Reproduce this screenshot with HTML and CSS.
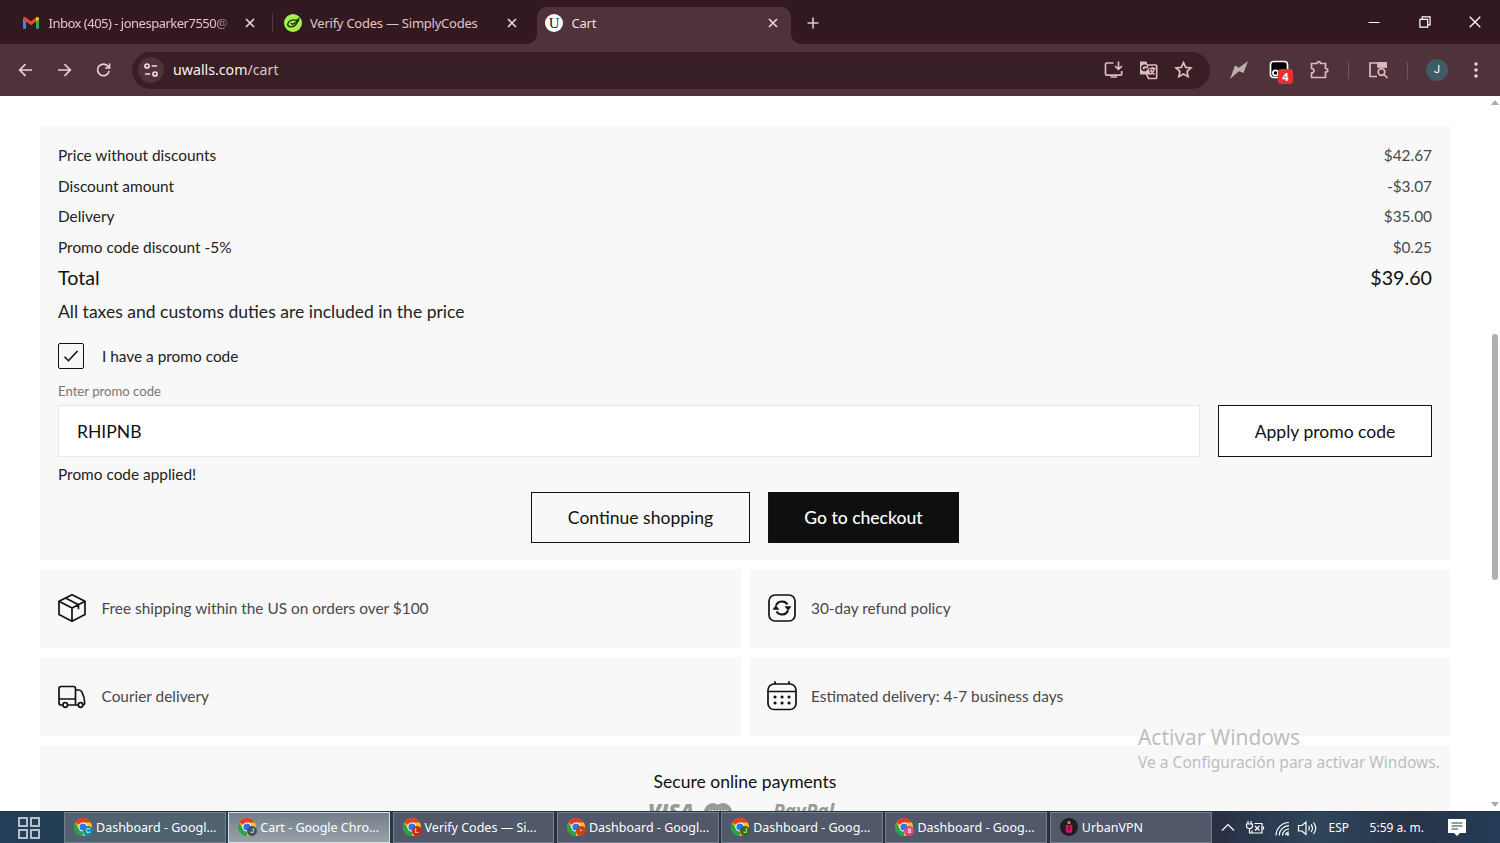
FILE: index.html
```html
<!DOCTYPE html>
<html lang="en">
<head>
    <meta charset="UTF-8">
    <meta name="viewport" content="width=device-width, initial-scale=1.0">
    <title>Cart</title>
    <link rel="stylesheet" href="styles.css">
</head>
<body>
    <svg class="defs" width="0" height="0">
        <symbol id="close" viewBox="0 0 10 10"><path d="M1 1l8 8M9 1l-8 8" fill="none" stroke="currentColor" stroke-width="1.7"/></symbol>
        <symbol id="chrome" viewBox="0 0 20 20">
            <circle cx="10" cy="10" r="9" fill="#fbc31c"/>
            <path d="M10 10L2.2 5.5A9 9 0 0 1 17.8 5.5H10z" fill="#e33b2e"/>
            <path d="M10 10L10 19A9 9 0 0 1 2.2 5.5L6 12z" fill="#2aa24c"/>
            <circle cx="10" cy="10" r="4.6" fill="#fff"/>
            <circle cx="10" cy="10" r="3.6" fill="#2f74e8"/>
        </symbol>
    </svg>

    <div class="tab-strip">
        <div class="tab">
            <svg class="favicon" viewBox="0 0 18 18">
                <path d="M1 4.5V14.8h3V7.5z" fill="#4285f4"/>
                <path d="M17 4.5V14.8h-3V7.5z" fill="#34a853"/>
                <path d="M1 4.6C1 3 3 2.5 4 3.5l5 3.8 5-3.8v4L9 11.3 1 5.6z" fill="#ea4335"/>
                <path d="M14 3.5C15 2.5 17 3 17 4.8v.8l-3 2.2z" fill="#fbbc04"/>
            </svg>
            <span class="tab-title fade">Inbox (405) - jonesparker7550@</span>
            <svg class="tab-close"><use href="#close"/></svg>
        </div>
        <div class="tab divided">
            <svg class="favicon" viewBox="0 0 18 18">
                <circle cx="9" cy="9" r="9" fill="#a5f04b"/>
                <path d="M12.5 6.6C9 4.7 4.2 7 3.7 10c-.3 3 4.3 3.9 7.3 1.4 1.5-1.2 2.3-2.7 2.6-4.2L8.5 10.3 6.6 9M12 6.5l2.700-1.7-.7 3" fill="none" stroke="#20350f" stroke-width="1.4"/>
            </svg>
            <span class="tab-title">Verify Codes — SimplyCodes</span>
            <svg class="tab-close"><use href="#close"/></svg>
        </div>
        <div class="tab active">
            <span class="favicon cart-favicon">U</span>
            <span class="tab-title">Cart</span>
            <svg class="tab-close"><use href="#close"/></svg>
        </div>
        <svg class="new-tab" viewBox="0 0 12 12"><path d="M6 .5v11M.5 6h11" fill="none" stroke="currentColor" stroke-width="1.6"/></svg>
        <div class="window-controls">
            <svg viewBox="0 0 12 12"><path d="M.5 6.500h11" stroke="currentColor"/></svg>
            <svg viewBox="0 0 12 12"><path d="M.9 3.3h7.8v7.8H.9zM3.2 3.3V.9h7.9v7.9H8.7" fill="none" stroke="currentColor" stroke-width="1.2"/></svg>
            <svg viewBox="0 0 12 12"><path d="M.7.7l10.6 10.6M11.3.7L.7 11.3" stroke="currentColor" stroke-width="1.3"/></svg>
        </div>
    </div>

    <div class="toolbar">
        <div class="nav">
            <svg viewBox="0 0 16 16"><path d="M14.5 8H2.5M8 2.2L2.2 8 8 13.8"/></svg>
            <svg viewBox="0 0 16 16"><path d="M1.5 8h12M8 2.2L13.8 8 8 13.8"/></svg>
            <svg viewBox="0 0 16 16"><path d="M13.6 8.8A5.8 5.8 0 1 1 12.4 4.200L14 6M14 1.5V6H9.6"/></svg>
        </div>
        <div class="omnibox">
            <span class="site-info">
                <svg viewBox="0 0 16 16"><path d="M8.8 4H14M2 12h5.2"/><circle cx="4" cy="4" r="2"/><circle cx="12" cy="12" r="2"/></svg>
            </span>
            <span class="url">uwalls.com<span>/cart</span></span>
            <div class="omni-actions">
                <svg viewBox="0 0 20 20"><path d="M10 3H3.2A1.2 1.2 0 0 0 2 4.2V14a1.2 1.2 0 0 0 1.2 1.2H17a1.2 1.2 0 0 0 1.2-1.2V11M15 1.5V9M11.5 6L15 9.3 18.5 6M7 17h6.5"/></svg>
                <svg viewBox="0 0 20 20"><path d="M8 5h9.2a1 1 0 0 1 1 1v11.5a1 1 0 0 1-1 1H10L8 14M11 8.5h6M14 7v1.5M15.800 8.7c-.5 2.5-2 4.5-4 5.8M12 10c1 2 2.5 3.5 4 4.5"/><path d="M1.5 1.5H8l4 13H2.5a1 1 0 0 1-1-1z" fill="#dfb9c1" stroke="none"/><path d="M8 6.3A2.6 2.6 0 1 0 8.3 9H6" stroke="#3a1f25"/></svg>
                <svg viewBox="0 0 20 20"><path d="M10 2.6l2.200 4.800 5.200.6-3.900 3.500 1.100 5.200L10 14.100l-4.600 2.600 1.100-5.200L2.600 8l5.200-.6z"/></svg>
            </div>
        </div>
        <div class="extensions">
            <svg viewBox="0 0 20 20"><path d="M1 19L6 5.500l4 2.300L19 1l-4.500 12-4.500-1.800z" fill="#b9b0ad" stroke="none"/></svg>
            <span class="ext-badge">
                <svg viewBox="0 0 20 20"><rect x="1.5" y="1.5" width="17" height="16" rx="3" fill="#000" stroke="#fff"/><circle cx="6.5" cy="13" r="2.6" stroke="#fff"/></svg>
                <b>4</b>
            </span>
            <svg viewBox="0 0 20 20"><path d="M2.5 3.5H8C8 1 11.5 1 11.5 3.5h5v5c3 0 3 3.5 0 3.5v5.5h-14V13c3.3 0 3.3-4.5 0-4.500z"/></svg>
            <i class="sep"></i>
            <svg viewBox="0 0 20 20"><path d="M9 16.5H2V3h16v5"/><path d="M10 3h8v4h-8z" fill="#dfb9c1"/><circle cx="13.5" cy="12" r="3.3"/><path d="M16 14.5l3.5 3.5"/></svg>
            <i class="sep"></i>
            <span class="avatar">J</span>
            <svg class="dots" viewBox="0 0 20 20"><circle cx="10" cy="4" r="1.8"/><circle cx="10" cy="10" r="1.8"/><circle cx="10" cy="16" r="1.8"/></svg>
        </div>
    </div>

    <div class="viewport">
        <main class="page">
            <section class="summary">
                <div class="row"><span>Price without discounts</span><span class="value">$42.67</span></div>
                <div class="row"><span>Discount amount</span><span class="value">-$3.07</span></div>
                <div class="row"><span>Delivery</span><span class="value">$35.00</span></div>
                <div class="row"><span>Promo code discount -5%</span><span class="value">$0.25</span></div>
                <div class="row total"><span>Total</span><span>$39.60</span></div>
                <p class="note">All taxes and customs duties are included in the price</p>
                <div class="promo-toggle">
                    <span class="checkbox">
                        <svg viewBox="0 0 16 16"><path d="M1.5 8.7l4 4L14.5 3" fill="none" stroke="#111" stroke-width="1.6"/></svg>
                    </span>
                    <span>I have a promo code</span>
                </div>
                <div class="promo-label">Enter promo code</div>
                <div class="promo-form">
                    <div class="promo-input">RHIPNB</div>
                    <div class="btn apply">Apply promo code</div>
                </div>
                <div class="promo-status">Promo code applied!</div>
                <div class="actions">
                    <div class="btn continue">Continue shopping</div>
                    <div class="btn checkout">Go to checkout</div>
                </div>
            </section>

            <section class="benefits">
                <div class="benefit">
                    <svg viewBox="0 0 30 30"><path d="M15 1.7l13 6.6v13.2l-13 6.8-13-6.8V8.3zM2 8.3l13 6.8 13-6.8M15 15.1v13.2M8.5 5l13 6.800v4.5"/></svg>
                    <span>Free shipping within the US on orders over $100</span>
                </div>
                <div class="benefit">
                    <svg viewBox="0 0 30 30"><rect x="2" y="2" width="26" height="26" rx="6"/><path d="M9 12.500A6.500 6.500 0 0 1 20.500 11.500M21 17.500A6.500 6.500 0 0 1 9.500 18.500" stroke-width="2"/><path d="M6 16.500l2.800-4 3.200 4zM24 13.500l-2.800 4-3.200-4z" fill="#111" stroke-width=".5"/></svg>
                    <span>30-day refund policy</span>
                </div>
                <div class="benefit">
                    <svg viewBox="0 0 30 30"><path d="M6 24H4a2 2 0 0 1-2-2V7.500a2 2 0 0 1 2-2h12.500a2 2 0 0 1 2 2V24H10.500M2 18h16.500M18.500 9H22c1.500 0 2.300.8 3 2.200 1.700 3.300 2.700 7 2.700 10.800a2 2 0 0 1-1.500 2M18.500 24h2.700"/><circle cx="8.200" cy="24" r="2.300"/><circle cx="23.600" cy="24" r="2.300"/></svg>
                    <span>Courier delivery</span>
                </div>
                <div class="benefit">
                    <svg viewBox="0 0 30 30"><rect x="1" y="3" width="28" height="25.500" rx="6"/><path d="M1 10.500h28M8 .2V3M22 .2V3"/><path d="M8 16h.1M15 16h.1M22 16h.1M8 22h.1M15 22h.1M22 22h.1" stroke-width="3" stroke-linecap="round"/></svg>
                    <span>Estimated delivery: 4-7 business days</span>
                </div>
            </section>

            <section class="payments">
                <div class="payments-title">Secure online payments</div>
                <div class="payment-logos">
                    <span class="visa">VISA</span>
                    <svg class="mastercard" viewBox="0 0 28 18"><circle cx="9" cy="9" r="9"/><circle cx="19" cy="9" r="9"/><path d="M5 7.500h19" stroke="#d5d5d5" stroke-dasharray="2 1"/></svg>
                    <span class="paypal">PayPal</span>
                </div>
            </section>
        </main>
        <div class="scrollbar">
            <svg viewBox="0 0 8 5"><path d="M0 5l4-5 4 5z"/></svg>
            <i class="thumb"></i>
            <svg viewBox="0 0 8 5"><path d="M0 0l4 5 4-5z"/></svg>
        </div>
        <div class="watermark">
            <div class="watermark-title">Activar Windows</div>
            <div class="watermark-text">Ve a Configuración para activar Windows.</div>
        </div>
    </div>

    <div class="taskbar">
        <svg class="task-view" viewBox="0 0 22 22"><path d="M1 1h8v8H1zM13 1h8v8h-8zM1 13h8v8H1zM13 13h8v8h-8z"/></svg>
        <div class="tasks">
            <div class="task"><span class="task-icon"><svg><use href="#chrome"/></svg><b class="teal">C</b></span><span>Dashboard - Googl...</span></div>
            <div class="task current"><span class="task-icon"><svg><use href="#chrome"/></svg><b class="slate">J</b></span><span>Cart - Google Chro...</span></div>
            <div class="task"><span class="task-icon"><svg><use href="#chrome"/></svg><b class="red">L</b></span><span>Verify Codes — Si...</span></div>
            <div class="task"><span class="task-icon"><svg><use href="#chrome"/></svg><b class="orange">•</b></span><span>Dashboard - Googl...</span></div>
            <div class="task"><span class="task-icon"><svg><use href="#chrome"/></svg><b class="green">J</b></span><span>Dashboard - Goog...</span></div>
            <div class="task"><span class="task-icon"><svg><use href="#chrome"/></svg><b class="pink">ä</b></span><span>Dashboard - Goog...</span></div>
            <div class="task">
                <span class="task-icon"><svg viewBox="0 0 20 20"><circle cx="10" cy="10" r="9" fill="#201c22"/><path d="M6.800 8h6.400v5.500q0 2.500-3.200 2.500t-3.200-2.500z" fill="#c41a62"/><path d="M9.500 9h1.200v4.500H9.500z" fill="#5d1234"/><circle cx="10" cy="5.500" r="1.600" fill="#d8932c"/></svg></span>
                <span>UrbanVPN</span>
            </div>
        </div>
        <div class="tray">
            <svg viewBox="0 0 20 20"><path d="M4 12.500l6-6 6 6"/></svg>
            <svg viewBox="0 0 20 20"><path d="M3 3v3M6 3v3M1.500 6h6v2q0 2.500-3 2.500t-3-2.500zM4.500 10.500V15H7M9.500 5.500H17V15H7V12.500M18.500 8.500v3M10 8l4.500 4.500M14.500 8L10 12.500"/></svg>
            <svg viewBox="0 0 20 20"><path d="M4 17.500A13 13 0 0 1 17 4.500M7.200 17.500A9.800 9.800 0 0 1 17 7.700M10.500 17.500A6.500 6.500 0 0 1 17 11M13.500 17A3.500 3.500 0 0 1 17 14"/><circle cx="15.800" cy="16.500" r="1.300" fill="#fff" stroke="none"/></svg>
            <svg viewBox="0 0 20 20"><path d="M1.500 7.500H5L9 4v12.500L5 13H1.500zM11.500 8q1.700 2.200 0 4.500M14 6.500q3 3.700 0 7.500M16.500 4.500q4.500 5.700 0 11.500"/></svg>
            <span class="lang">ESP</span>
            <span class="clock">5:59 a. m.</span>
            <svg class="notice" viewBox="0 0 20 20"><path d="M1 1h18v14h-6l-3 3-3-3H1z" fill="#fff" stroke="none"/><path d="M4.500 5h11M4.500 8h11M4.500 11h6.500" stroke="#26384f"/></svg>
        </div>
    </div>
</body>
</html>
```
FILE: styles.css
```css
* {
    margin: 0;
    padding: 0;
    box-sizing: border-box;
}

body {
    width: 1500px;
    height: 843px;
    overflow: hidden;
    display: flex;
    flex-direction: column;
    background: #fff;
    font-family: 'Noto Sans', sans-serif;
}

svg {
    display: block;
    flex: none;
}

.defs {
    position: absolute;
}

/* Browser tabs */
.tab-strip {
    height: 44px;
    flex: none;
    display: flex;
    align-items: flex-end;
    padding-left: 14px;
    background: #32191f;
    color: #e3c3ca;
}

.tab {
    width: 254px;
    height: 37px;
    margin-right: 7.5px;
    padding: 0 13px 6px 8px;
    display: flex;
    align-items: center;
    font-size: 13px;
    letter-spacing: -0.24px;
}

.tab.divided {
    border-image: linear-gradient(#32191f 18%, #56383f 18%, #56383f 66%, #32191f 66%) 1;
    border-left: 1px solid;
    margin-left: -4px;
    padding-left: 11px;
    width: 258px;
}

.tab.active {
    position: relative;
    background: #50323a;
    border-radius: 10px 10px 0 0;
    color: #f3dde1;
}

.tab.active::before,
.tab.active::after {
    content: '';
    position: absolute;
    bottom: 0;
    width: 10px;
    height: 10px;
}

.tab.active::before {
    left: -10px;
    background: radial-gradient(circle at 0 0, transparent 9.5px, #50323a 10px);
}

.tab.active::after {
    right: -10px;
    background: radial-gradient(circle at 100% 0, transparent 9.5px, #50323a 10px);
}

.favicon {
    width: 18px;
    height: 18px;
    flex: none;
}

.cart-favicon {
    border-radius: 50%;
    background: #fff;
    color: #222;
    font: 15px/18px 'Liberation Serif', serif;
    text-align: center;
}

.tab-title {
    flex: 1;
    margin-left: 8.5px;
    white-space: nowrap;
    overflow: hidden;
}

.tab-title.fade {
    flex: none;
    width: 184px;
    margin-right: auto;
    letter-spacing: -0.5px;
    -webkit-mask-image: linear-gradient(90deg, #000 90%, transparent);
    mask-image: linear-gradient(90deg, #000 90%, transparent);
}

.tab-close {
    width: 10px;
    height: 10px;
    color: #efd0d7;
}

.new-tab {
    width: 12px;
    height: 12px;
    margin: 0 0 15px 8px;
}

.window-controls {
    align-self: center;
    display: flex;
    gap: 38.5px;
    margin-left: auto;
    margin-right: 19px;
    color: #fff;
}

.window-controls svg {
    width: 12px;
    height: 12px;
}

/* Toolbar */
.toolbar {
    height: 52px;
    flex: none;
    display: flex;
    align-items: center;
    padding-left: 6px;
    background: #50323a;
    color: #dfb9c1;
}

.toolbar svg {
    fill: none;
    stroke: currentColor;
    stroke-width: 1.7;
}

.nav {
    display: flex;
    color: #ecd0d6;
}

.nav svg {
    width: 39px;
    height: 16px;
}

.omnibox {
    width: 1078px;
    height: 37px;
    margin-left: 9px;
    padding: 0 9px 0 6px;
    display: flex;
    align-items: center;
    border-radius: 19px;
    background: #381f25;
}

.site-info {
    width: 26px;
    height: 26px;
    display: flex;
    align-items: center;
    justify-content: center;
    border-radius: 50%;
    background: #50323a;
    color: #f3dde1;
}

.site-info svg {
    width: 16px;
    height: 16px;
}

.url {
    margin: -2px 0 0 9px;
    font-size: 14.2px;
    color: #fbeff1;
}

.url span {
    color: #dcc3c8;
}

.omni-actions {
    display: flex;
    margin-left: auto;
}

.omni-actions svg {
    width: 35px;
    height: 20px;
}

.extensions {
    display: flex;
    align-items: center;
    margin-left: 9px;
}

.extensions > svg {
    width: 40px;
    height: 20px;
}

.ext-badge {
    position: relative;
    width: 40px;
    padding-left: 10px;
}

.ext-badge svg {
    width: 20px;
    height: 20px;
}

.ext-badge b {
    position: absolute;
    left: 19px;
    top: 9px;
    width: 15px;
    height: 15px;
    border-radius: 3px;
    background: #e5322f;
    color: #fff;
    font: bold 11px/16px 'Open Sans', sans-serif;
    text-align: center;
}

.sep {
    width: 1px;
    height: 17px;
    margin: 0 9px;
    background: #74535b;
}

.avatar {
    width: 22px;
    height: 22px;
    margin: 0 9px;
    border-radius: 50%;
    background: #3f5c66;
    color: #fff;
    font: 11px/22px 'Roboto', sans-serif;
    text-align: center;
}

.extensions .dots {
    width: 38px;
    fill: #ecd0d6;
    stroke: none;
}

/* Cart page */
.viewport {
    position: relative;
    height: 715px;
    flex: none;
    overflow: hidden;
    display: flex;
    justify-content: space-between;
    background: #fff;
    font-family: 'Lato', sans-serif;
    color: #222;
}

.page {
    width: 1410px;
    margin-left: 40px;
    padding-top: 30px;
}

.summary {
    height: 434px;
    padding: 14px 18px 0;
    background: #f8f8f8;
    font-size: 15.4px;
}

.row {
    height: 30.7px;
    display: flex;
    justify-content: space-between;
    line-height: 31px;
}

.row .value {
    color: #484848;
}

.row.total {
    height: 29px;
    line-height: 29px;
    font-size: 19.7px;
    color: #111;
}

.note {
    margin-top: 8px;
    font-size: 17.55px;
    line-height: 24px;
}

.promo-toggle {
    display: flex;
    align-items: center;
    height: 26px;
    margin-top: 19px;
}

.checkbox {
    width: 26px;
    height: 26px;
    margin-right: 18px;
    display: flex;
    align-items: center;
    justify-content: center;
    border: 1px solid #111;
    border-radius: 2px;
}

.checkbox svg {
    width: 16px;
    height: 16px;
}

.promo-label {
    margin-top: 12px;
    height: 24px;
    font-size: 13.15px;
    line-height: 20px;
    color: #777;
}

.promo-form {
    display: flex;
    gap: 18px;
}

.promo-input {
    flex: 1;
    height: 52px;
    padding-left: 18px;
    border: 1px solid #e8e8e8;
    background: #fff;
    font-size: 17.55px;
    line-height: 51px;
    color: #111;
}

.btn {
    height: 51px;
    border: 1px solid #111;
    font-size: 17.55px;
    line-height: 50px;
    text-align: center;
    color: #111;
}

.apply {
    width: 214px;
    height: 52px;
    background: #fff;
    line-height: 51px;
}

.promo-status {
    height: 35px;
    line-height: 35px;
}

.actions {
    display: flex;
    justify-content: center;
    gap: 18px;
}

.continue {
    width: 219px;
}

.checkout {
    width: 191px;
    background: #0f0f0f;
    color: #fff;
    font-weight: 500;
}

.benefits {
    display: grid;
    grid-template-columns: 1fr 1fr;
    gap: 9px;
    margin: 9px 0;
}

.benefit {
    height: 79px;
    padding: 0 0 1px 17px;
    display: flex;
    align-items: center;
    gap: 14.5px;
    background: #f8f8f8;
    font-size: 15.4px;
    color: #484848;
}

.benefit svg {
    width: 30px;
    height: 30px;
    fill: none;
    stroke: #111;
    stroke-width: 1.7;
    stroke-linejoin: round;
}

.payments {
    height: 120px;
    padding-top: 25px;
    background: #f8f8f8;
    text-align: center;
}

.payments-title {
    font-size: 17.55px;
    line-height: 24px;
    color: #111;
}

.payment-logos {
    display: flex;
    padding-left: 605px;
    margin-top: 9px;
    color: #999;
    font: italic bold 19px/16px 'Open Sans', sans-serif;
}

.visa {
    width: 52px;
    font-size: 21px;
    font-weight: 800;
    line-height: 17px;
}

.mastercard {
    width: 28px;
    height: 18px;
    margin: 0 41px 0 7px;
    fill: #999;
}

.scrollbar {
    width: 10px;
    display: flex;
    flex-direction: column;
    align-items: center;
    padding: 4px 0;
}

.scrollbar svg {
    width: 8px;
    height: 5px;
    fill: #aaa;
}

.thumb {
    width: 6px;
    height: 246px;
    margin: 229px 0 auto;
    border-radius: 3px;
    background: #b0b0b0;
}

.watermark {
    position: absolute;
    left: 1138px;
    top: 627px;
    font-family: 'Noto Sans', sans-serif;
    color: #bdbdbd;
    white-space: nowrap;
}

.watermark-title {
    font-size: 20.9px;
    line-height: 28px;
}

.watermark-text {
    font-size: 15.55px;
    line-height: 22px;
}

/* Windows taskbar */
.taskbar {
    height: 32px;
    flex: none;
    display: flex;
    background: linear-gradient(90deg, #233e57 0, #253b50 15%, #292e44 40%, #282c42 80%, #2e465b 88%, #283448 94%, #233b55 100%);
    border-top: 1px solid #263545;
    color: #fff;
    font-size: 12px;
}

.task-view {
    width: 22px;
    height: 22px;
    margin: 5px 24px 0 18px;
    fill: none;
    stroke: #b9bfc7;
    stroke-width: 2;
}

.tasks {
    display: flex;
    gap: 2.5px;
    font-size: 12.5px;
}

.task {
    width: 161.8px;
    display: flex;
    align-items: center;
    padding: 0 0 1px 9px;
    border: 1px solid #76808c;
    background: #50586a;
    white-space: nowrap;
}

.task:first-child {
    background: #506270;
}

.task.current {
    background: linear-gradient(#747f8b, #98a1a9);
    border-color: #dce0e3;
}

.task-icon {
    position: relative;
    width: 18px;
    height: 20px;
    margin-right: 4px;
}

.task-icon svg {
    width: 20px;
    height: 20px;
    margin-left: -1px;
}

.task-icon b {
    position: absolute;
    right: -1px;
    bottom: 1px;
    width: 10px;
    height: 10px;
    border-radius: 50%;
    color: #fff;
    font: 7px/10px 'Roboto', sans-serif;
    text-align: center;
}

.teal {
    background: #0c8ca0;
}

.slate {
    background: #3b5362;
}

.red {
    background: #c62918;
}

.orange {
    background: #c44316;
}

.green {
    background: #2b6d20;
}

.pink {
    background: #ed3d83;
}

.tray {
    flex: 1;
    display: flex;
    align-items: center;
    padding-left: 6px;
}

.tray svg {
    width: 20px;
    height: 20px;
    margin-right: 7px;
    fill: none;
    stroke: #fff;
    stroke-width: 1.2;
}

.tray svg:nth-child(3) {
    margin-right: 5px;
}

.lang {
    width: 20px;
    margin: 0 21px 0 5px;
}

.clock {
    width: 56px;
    white-space: nowrap;
}

.tray .notice {
    margin: 0 0 0 21px;
}
```
